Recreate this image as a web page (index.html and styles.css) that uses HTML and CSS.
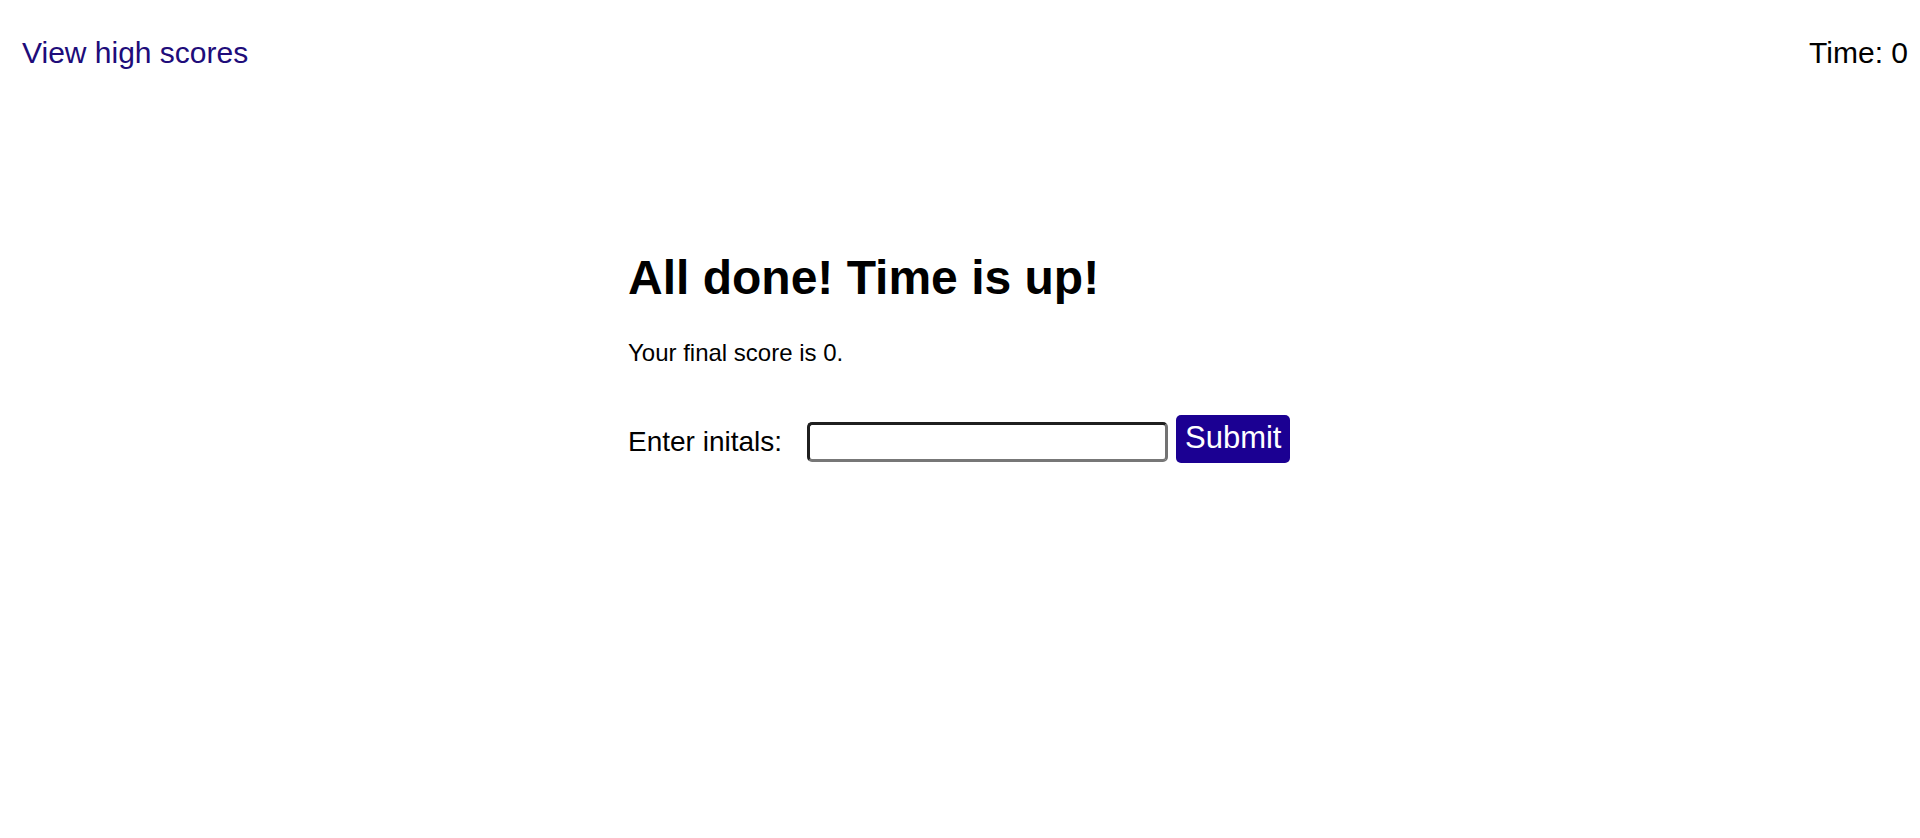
FILE: index.html
```html
<!DOCTYPE html>
<html lang="en">
<head>
<meta charset="utf-8">
<title>Quiz - All done</title>
<link rel="stylesheet" href="styles.css">
</head>
<body>
<header class="top-bar">
  <a class="scores-link" href="#">View high scores</a>
  <div class="timer">Time: 0</div>
</header>
<main class="content">
  <h1 class="title">All done! Time is up!</h1>
  <p class="final">Your final score is 0.</p>
  <form class="initials-form">
    <label class="initials-label" for="initials">Enter initals:</label>
    <input class="initials-input" id="initials" type="text">
    <button class="submit-btn" type="button">Submit</button>
  </form>
</main>
</body>
</html>
```

FILE: styles.css
```css
html, body {
  margin: 0;
  padding: 0;
  background: #ffffff;
}

body {
  font-family: "Liberation Sans", Arial, sans-serif;
  color: #000000;
}

.top-bar {
  display: flex;
  justify-content: space-between;
  align-items: flex-start;
  padding: 35px 12px 0 22px;
  font-size: 30px;
  line-height: 1.2;
}

.scores-link {
  color: #200c7a;
  text-decoration: none;
}

.timer {
  color: #000000;
}

.content {
  width: 664px;
  margin: 0 auto;
}

.title {
  margin: 178px 0 0 0;
  font-size: 48px;
  font-weight: bold;
  line-height: 1.2;
}

.final {
  margin: 32px 0 0 0;
  font-size: 24px;
  line-height: 1.2;
}

.initials-form {
  display: flex;
  align-items: flex-start;
  margin-top: 48px;
}

.initials-label {
  width: 179px;
  margin-top: 10px;
  font-size: 28px;
  line-height: 1.2;
  white-space: nowrap;
}

.initials-input {
  box-sizing: border-box;
  width: 361px;
  height: 40px;
  margin: 7px 0 0 0;
  padding: 0 6px;
  border-style: solid;
  border-width: 3px;
  border-color: #1f1f1f #737373 #777777 #1f1f1f;
  border-radius: 5px;
  background: #ffffff;
  font-family: inherit;
  font-size: 22px;
  outline: none;
}

.submit-btn {
  box-sizing: border-box;
  height: 48px;
  margin-left: 8px;
  padding: 4px 9px 7px;
  border: none;
  border-radius: 5px;
  background: #1b0092;
  color: #ffffff;
  font-family: inherit;
  font-size: 31px;
  line-height: 1.2;
  cursor: pointer;
}
```
